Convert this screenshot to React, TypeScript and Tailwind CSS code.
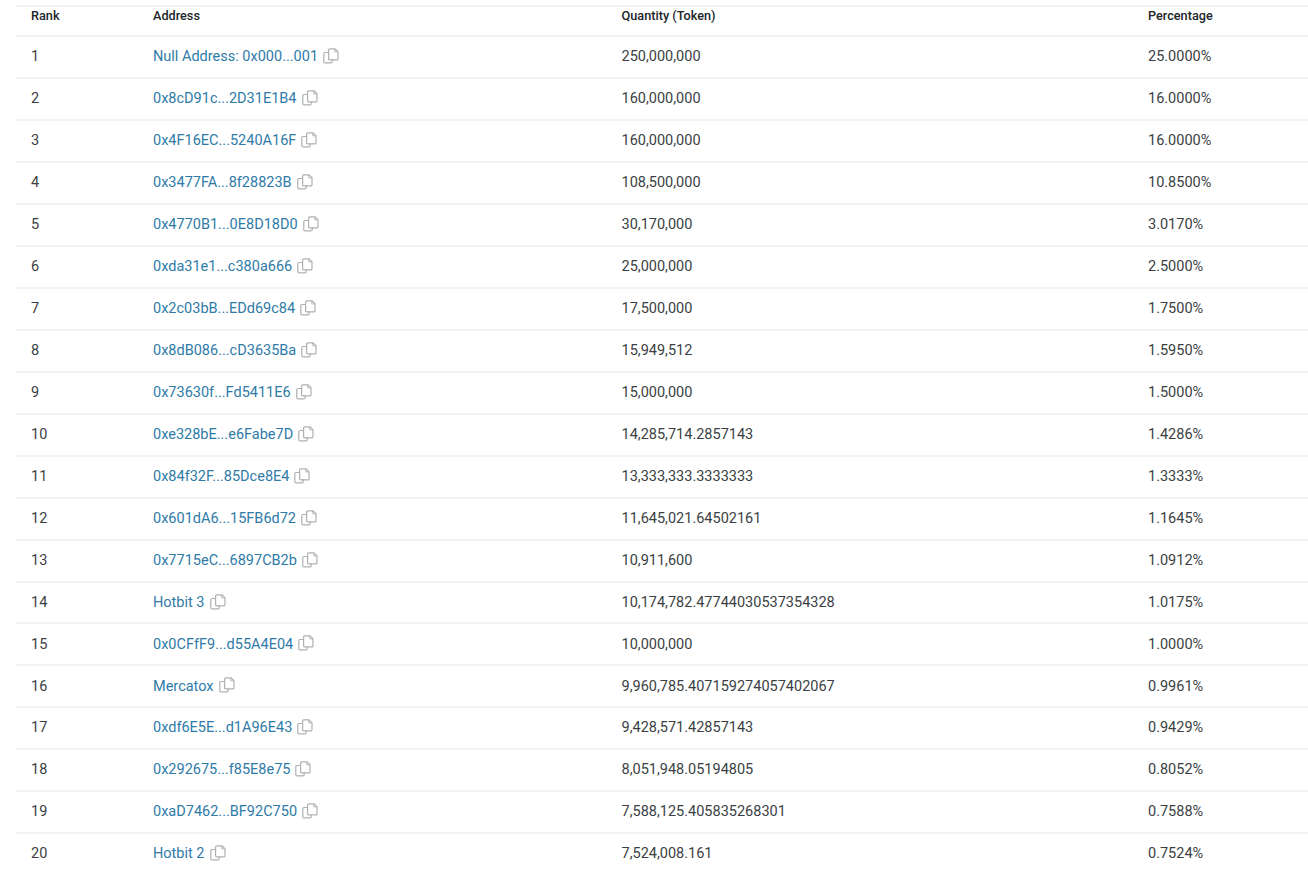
const rows = [
  ['1', 'Null Address: 0x000...001', '250,000,000', '25.0000%'],
  ['2', '0x8cD91c...2D31E1B4', '160,000,000', '16.0000%'],
  ['3', '0x4F16EC...5240A16F', '160,000,000', '16.0000%'],
  ['4', '0x3477FA...8f28823B', '108,500,000', '10.8500%'],
  ['5', '0x4770B1...0E8D18D0', '30,170,000', '3.0170%'],
  ['6', '0xda31e1...c380a666', '25,000,000', '2.5000%'],
  ['7', '0x2c03bB...EDd69c84', '17,500,000', '1.7500%'],
  ['8', '0x8dB086...cD3635Ba', '15,949,512', '1.5950%'],
  ['9', '0x73630f...Fd5411E6', '15,000,000', '1.5000%'],
  ['10', '0xe328bE...e6Fabe7D', '14,285,714.2857143', '1.4286%'],
  ['11', '0x84f32F...85Dce8E4', '13,333,333.3333333', '1.3333%'],
  ['12', '0x601dA6...15FB6d72', '11,645,021.64502161', '1.1645%'],
  ['13', '0x7715eC...6897CB2b', '10,911,600', '1.0912%'],
  ['14', 'Hotbit 3', '10,174,782.47744030537354328', '1.0175%'],
  ['15', '0x0CFfF9...d55A4E04', '10,000,000', '1.0000%'],
  ['16', 'Mercatox', '9,960,785.407159274057402067', '0.9961%'],
  ['17', '0xdf6E5E...d1A96E43', '9,428,571.42857143', '0.9429%'],
  ['18', '0x292675...f85E8e75', '8,051,948.05194805', '0.8052%'],
  ['19', '0xaD7462...BF92C750', '7,588,125.405835268301', '0.7588%'],
  ['20', 'Hotbit 2', '7,524,008.161', '0.7524%'],
];

// two overlapping sheets, the back one has a small folded corner top right
const CopyIcon = () => (
  <svg width="16" height="16" viewBox="0 0 16 16" fill="none" stroke="#adb1b4" strokeWidth="1.2" className="mb-[2px]">
    <path d="M5.5 4.5H2a1.2 1.2 0 0 0-1.2 1.2v8a1.2 1.2 0 0 0 1.2 1.2h6a1.2 1.2 0 0 0 1.2-1.2v-2.2" />
    <path d="M5.6 2a1.2 1.2 0 0 1 1.2-1.2h5.2l3 3v6.9a1.2 1.2 0 0 1-1.2 1.2H6.8a1.2 1.2 0 0 1-1.2-1.2z" />
    <path d="M11.8 1v2.9h3" strokeWidth="0.9" />
  </svg>
);

const App = () => {
  return (
    <div className="h-[872px] overflow-hidden bg-white font-['Roboto',sans-serif] text-[14.5px] text-[#3b3f44]">
      <div className="pt-[5px] pl-4">
        <div className="grid grid-cols-[122px_468px_527px_175px] h-[32.35px] border-y-2 border-[#f2f3f4] text-[12.7px] leading-[17px] font-medium text-[#212529]">
          <div className="pl-[15px]">Rank</div>
          <div className="pl-[15px]">Address</div>
          <div className="pl-[15.5px]">Quantity (Token)</div>
          <div className="pl-[15px]">Percentage</div>
        </div>

        {rows.map(([rank, address, quantity, percent]) => (
          <div
            key={rank}
            className="grid grid-cols-[122px_468px_527px_175px] h-[41.95px] items-center border-b-2 border-[#f2f3f4]"
          >
            <div className="pl-[15px]">{rank}</div>
            <div className="pl-[15px] flex items-center gap-[5px]">
              <span className="text-[#2f7ba8]">{address}</span>
              <CopyIcon />
            </div>
            <div className="pl-[15.5px]">{quantity}</div>
            <div className="pl-[15px]">{percent}</div>
          </div>
        ))}
      </div>
    </div>
  );
};

export default App;
